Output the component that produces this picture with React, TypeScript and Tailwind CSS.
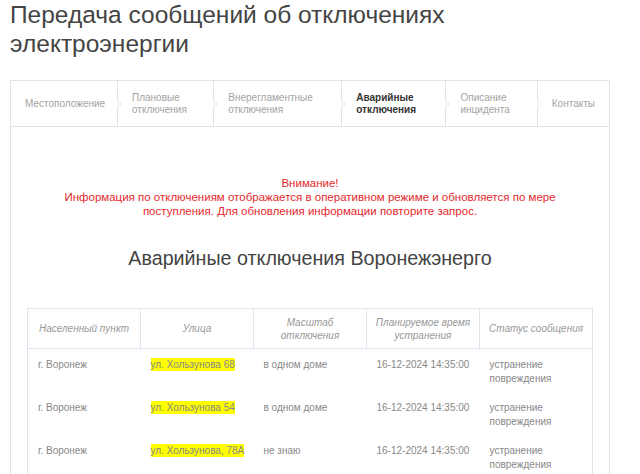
import * as React from "react"

const tabs = [
  { label: ["Местоположение"], w: "w-[106px]" },
  { label: ["Плановые", "отключения"], w: "w-[97px]" },
  { label: ["Внерегламентные", "отключения"], w: "w-[129px]" },
  { label: ["Аварийные", "отключения"], w: "w-[105px]", active: true },
  { label: ["Описание", "инцидента"], w: "w-[92px]" },
  { label: ["Контакты"], w: "flex-1" },
]

const rows = [
  { city: "г. Воронеж", street: "ул. Хользунова 68", scale: "в одном доме" },
  { city: "г. Воронеж", street: "ул. Хользунова 54", scale: "в одном доме" },
  { city: "г. Воронеж", street: "ул. Хользунова, 78А", scale: "не знаю" },
]

const Chevron = () => (
  <svg
    className="absolute left-[-1px] top-1/2 -translate-y-1/2"
    width="5"
    height="10"
    viewBox="0 0 5 10"
    fill="none"
  >
    <path d="M0.5 0.5 L4 5 L0.5 9.5" stroke="#e3e3e3" strokeWidth="1" fill="#fff" />
  </svg>
)

export default function App() {
  return (
    <div className="w-[640px] h-[474px] overflow-hidden bg-white font-['Liberation_Sans',Arial,sans-serif]">
      <h1 className="px-[10px] text-[24.5px] leading-[29px] text-[#444] font-normal">
        Передача сообщений об отключениях
        <br />
        электроэнергии
      </h1>

      <div className="ml-[10px] mt-[22px] w-[600px]">
        <div className="flex h-[47px] border border-[#e3e3e3]">
          {tabs.map((t, i) => (
            <div
              key={i}
              className={`relative flex items-center px-[14px] ${t.w} ${i > 0 ? "border-l border-[#e3e3e3]" : ""}`}
            >
              {i > 0 && <Chevron />}
              <span
                className={`text-[10px] leading-[12px] ${t.active ? "font-bold text-[#333]" : "text-[#a3a3a3]"}`}
              >
                {t.label.map((l, j) => (
                  <React.Fragment key={j}>
                    {j > 0 && <br />}
                    {l}
                  </React.Fragment>
                ))}
              </span>
            </div>
          ))}
        </div>

        <div className="border-x border-[#e3e3e3] px-[16px] pt-[49px] h-[400px]">
          <div className="text-center text-[11.5px] leading-[14px] text-[#e4282d]">
            Внимание!
            <br />
            Информация по отключениям отображается в оперативном режиме и обновляется по мере
            <br />
            поступления. Для обновления информации повторите запрос.
          </div>

          <h2 className="mt-[28px] text-center text-[19.7px] leading-[24px] text-[#444] font-normal">
            Аварийные отключения Воронежэнерго
          </h2>

          <table className="mt-[38px] w-[566px] table-fixed border-collapse border border-[#dde6ee]">
            <thead>
              <tr className="h-[40px]">
                {[
                  ["Населенный пункт"],
                  ["Улица"],
                  ["Масштаб", "отключения"],
                  ["Планируемое время", "устранения"],
                  ["Статус сообщения"],
                ].map((h, i) => (
                  <th
                    key={i}
                    className="border border-[#dde6ee] px-[6px] text-center align-middle text-[10px] leading-[13px] font-normal italic text-[#999]"
                  >
                    {h.map((l, j) => (
                      <React.Fragment key={j}>
                        {j > 0 && <br />}
                        {l}
                      </React.Fragment>
                    ))}
                  </th>
                ))}
              </tr>
            </thead>
            <tbody>
              {rows.map((r, i) => (
                <tr key={i} className="h-[43px] align-top text-[10px] leading-[14px] text-[#888]">
                  <td className="pl-[10px] pt-[9px]">{r.city}</td>
                  <td className="pl-[10px] pt-[9px]">
                    <span className="bg-[#ffff00] py-[1px]">{r.street}</span>
                  </td>
                  <td className="pl-[10px] pt-[9px]">{r.scale}</td>
                  <td className="pl-[10px] pt-[9px]">16-12-2024 14:35:00</td>
                  <td className="pl-[10px] pt-[9px]">
                    устранение
                    <br />
                    повреждения
                  </td>
                </tr>
              ))}
            </tbody>
          </table>
        </div>
      </div>
    </div>
  )
}
